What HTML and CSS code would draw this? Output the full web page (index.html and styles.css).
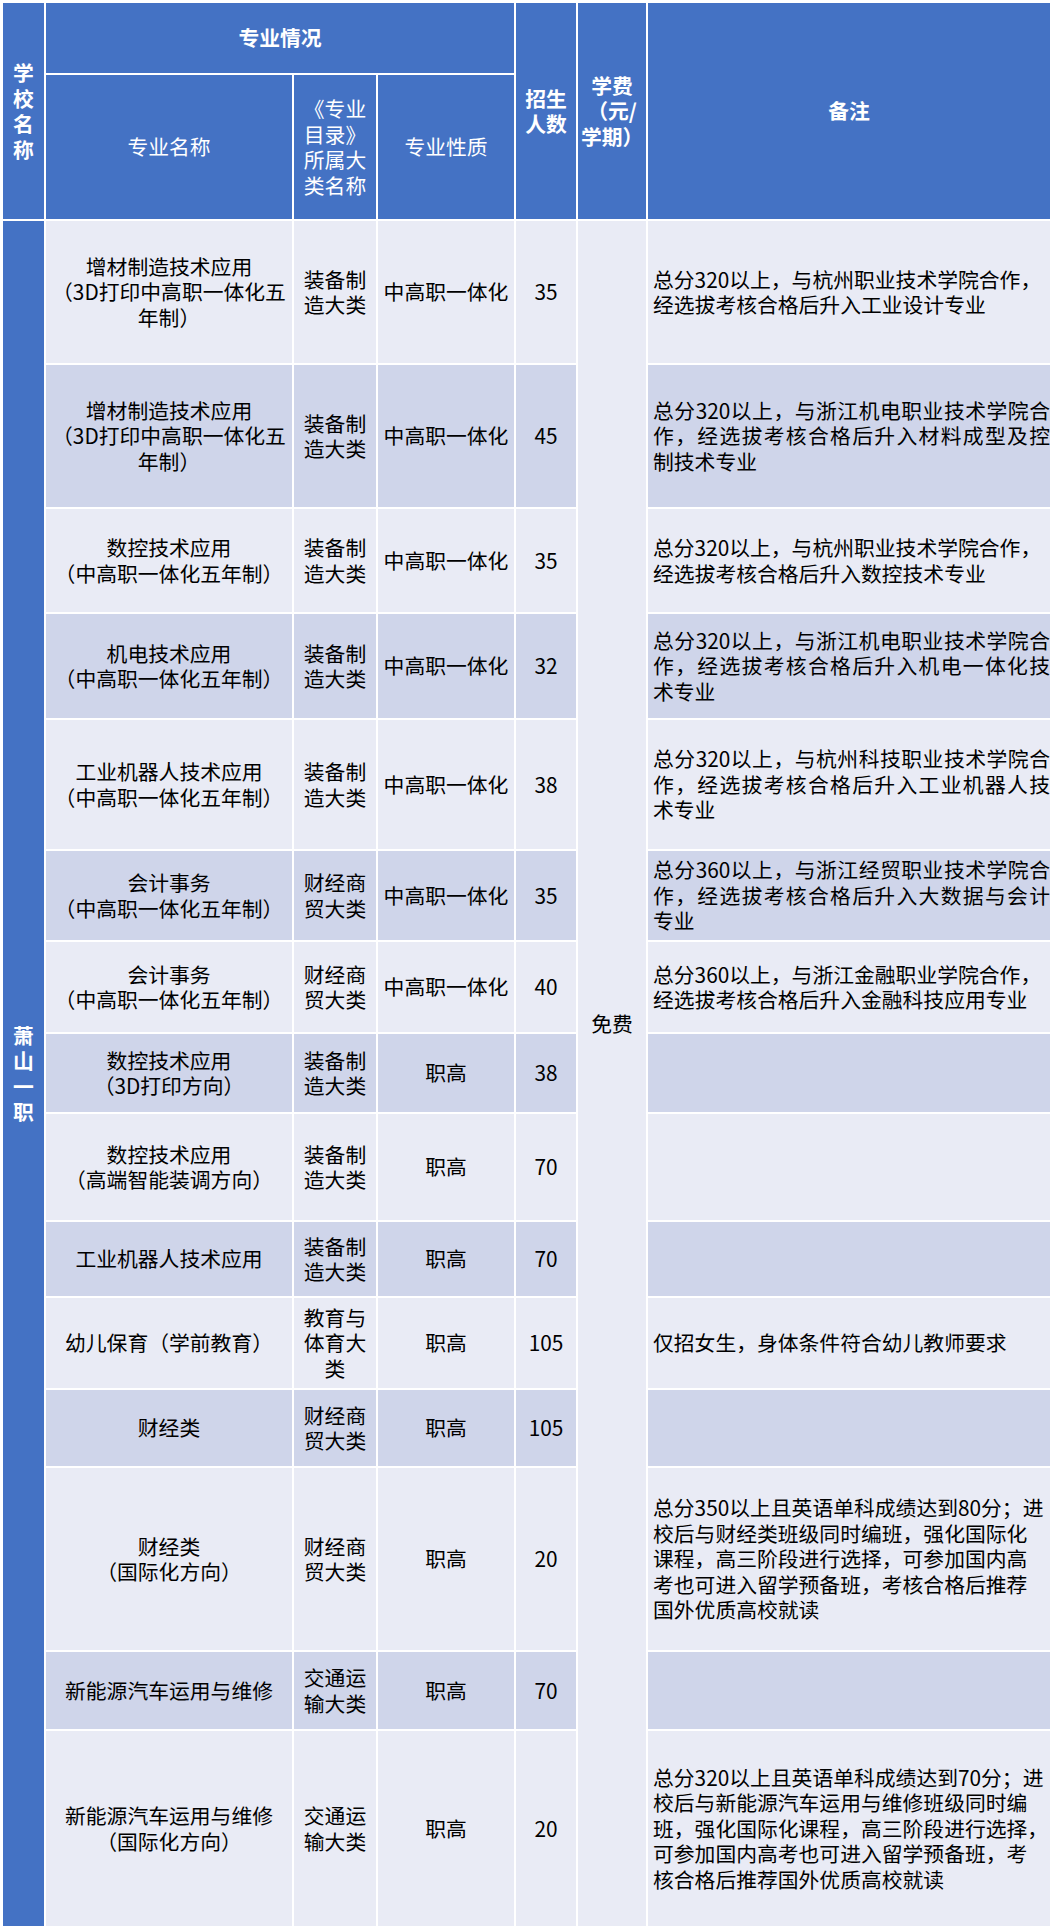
FILE: index.html
```html
<!DOCTYPE html>
<html lang="zh-CN">
<head>
<meta charset="utf-8">
<title>萧山一职 招生专业</title>
<link rel="stylesheet" href="styles.css">
</head>
<body>
<div class="sheet">
  <div class="cell h hb span2">学校名称</div>
  <div class="cell h hb span3c">专业情况</div>
  <div class="cell h hb span2">招生人数</div>
  <div class="cell h hb span2">学费（元/学期）</div>
  <div class="cell h hb span2">备注</div>
  <div class="cell h">专业名称</div>
  <div class="cell h">《专业目录》所属大类名称</div>
  <div class="cell h">专业性质</div>

  <!-- row 1 -->
  <div class="cell school">萧山一职</div>
  <div class="cell lt">增材制造技术应用<br>（3D打印中高职一体化五年制）</div>
  <div class="cell lt">装备制造大类</div>
  <div class="cell lt">中高职一体化</div>
  <div class="cell lt">35</div>
  <div class="cell fee">免费</div>
  <div class="cell lt remark"><div><span class="ln">总分320以上，与杭州职业技术学院合作，</span><span class="ln">经选拔考核合格后升入工业设计专业</span></div></div>

  <!-- row 2 -->
  <div class="cell dk">增材制造技术应用<br>（3D打印中高职一体化五年制）</div>
  <div class="cell dk">装备制造大类</div>
  <div class="cell dk">中高职一体化</div>
  <div class="cell dk">45</div>
  <div class="cell dk remark"><div><span class="ln j">总分320以上，与浙江机电职业技术学院合</span><span class="ln j">作，经选拔考核合格后升入材料成型及控</span><span class="ln">制技术专业</span></div></div>

  <!-- row 3 -->
  <div class="cell lt">数控技术应用<br>（中高职一体化五年制）</div>
  <div class="cell lt">装备制造大类</div>
  <div class="cell lt">中高职一体化</div>
  <div class="cell lt">35</div>
  <div class="cell lt remark"><div><span class="ln">总分320以上，与杭州职业技术学院合作，</span><span class="ln">经选拔考核合格后升入数控技术专业</span></div></div>

  <!-- row 4 -->
  <div class="cell dk">机电技术应用<br>（中高职一体化五年制）</div>
  <div class="cell dk">装备制造大类</div>
  <div class="cell dk">中高职一体化</div>
  <div class="cell dk">32</div>
  <div class="cell dk remark"><div><span class="ln j">总分320以上，与浙江机电职业技术学院合</span><span class="ln j">作，经选拔考核合格后升入机电一体化技</span><span class="ln">术专业</span></div></div>

  <!-- row 5 -->
  <div class="cell lt">工业机器人技术应用<br>（中高职一体化五年制）</div>
  <div class="cell lt">装备制造大类</div>
  <div class="cell lt">中高职一体化</div>
  <div class="cell lt">38</div>
  <div class="cell lt remark"><div><span class="ln j">总分320以上，与杭州科技职业技术学院合</span><span class="ln j">作，经选拔考核合格后升入工业机器人技</span><span class="ln">术专业</span></div></div>

  <!-- row 6 -->
  <div class="cell dk">会计事务<br>（中高职一体化五年制）</div>
  <div class="cell dk">财经商贸大类</div>
  <div class="cell dk">中高职一体化</div>
  <div class="cell dk">35</div>
  <div class="cell dk remark"><div><span class="ln j">总分360以上，与浙江经贸职业技术学院合</span><span class="ln j">作，经选拔考核合格后升入大数据与会计</span><span class="ln">专业</span></div></div>

  <!-- row 7 -->
  <div class="cell lt">会计事务<br>（中高职一体化五年制）</div>
  <div class="cell lt">财经商贸大类</div>
  <div class="cell lt">中高职一体化</div>
  <div class="cell lt">40</div>
  <div class="cell lt remark"><div><span class="ln">总分360以上，与浙江金融职业学院合作，</span><span class="ln">经选拔考核合格后升入金融科技应用专业</span></div></div>

  <!-- row 8 -->
  <div class="cell dk">数控技术应用<br>（3D打印方向）</div>
  <div class="cell dk">装备制造大类</div>
  <div class="cell dk">职高</div>
  <div class="cell dk">38</div>
  <div class="cell dk remark"></div>

  <!-- row 9 -->
  <div class="cell lt">数控技术应用<br>（高端智能装调方向）</div>
  <div class="cell lt">装备制造大类</div>
  <div class="cell lt">职高</div>
  <div class="cell lt">70</div>
  <div class="cell lt remark"></div>

  <!-- row 10 -->
  <div class="cell dk">工业机器人技术应用</div>
  <div class="cell dk">装备制造大类</div>
  <div class="cell dk">职高</div>
  <div class="cell dk">70</div>
  <div class="cell dk remark"></div>

  <!-- row 11 -->
  <div class="cell lt">幼儿保育（学前教育）</div>
  <div class="cell lt">教育与体育大类</div>
  <div class="cell lt">职高</div>
  <div class="cell lt">105</div>
  <div class="cell lt remark"><div><span class="ln">仅招女生，身体条件符合幼儿教师要求</span></div></div>

  <!-- row 12 -->
  <div class="cell dk">财经类</div>
  <div class="cell dk">财经商贸大类</div>
  <div class="cell dk">职高</div>
  <div class="cell dk">105</div>
  <div class="cell dk remark"></div>

  <!-- row 13 -->
  <div class="cell lt">财经类<br>（国际化方向）</div>
  <div class="cell lt">财经商贸大类</div>
  <div class="cell lt">职高</div>
  <div class="cell lt">20</div>
  <div class="cell lt remark"><div><span class="ln">总分350以上且英语单科成绩达到80分；进</span><span class="ln">校后与财经类班级同时编班，强化国际化</span><span class="ln">课程，高三阶段进行选择，可参加国内高</span><span class="ln">考也可进入留学预备班，考核合格后推荐</span><span class="ln">国外优质高校就读</span></div></div>

  <!-- row 14 -->
  <div class="cell dk">新能源汽车运用与维修</div>
  <div class="cell dk">交通运输大类</div>
  <div class="cell dk">职高</div>
  <div class="cell dk">70</div>
  <div class="cell dk remark"></div>

  <!-- row 15 -->
  <div class="cell lt">新能源汽车运用与维修<br>（国际化方向）</div>
  <div class="cell lt">交通运输大类</div>
  <div class="cell lt">职高</div>
  <div class="cell lt">20</div>
  <div class="cell lt remark"><div><span class="ln">总分320以上且英语单科成绩达到70分；进</span><span class="ln">校后与新能源汽车运用与维修班级同时编</span><span class="ln">班，强化国际化课程，高三阶段进行选择，</span><span class="ln">可参加国内高考也可进入留学预备班，考</span><span class="ln">核合格后推荐国外优质高校就读</span></div></div>
</div>
</body>
</html>
```

FILE: styles.css
```css
html, body {
  margin: 0;
  padding: 0;
  background: #ffffff;
}

body {
  font-family: "Noto Sans CJK SC", "Microsoft YaHei", sans-serif;
  color: #000000;
}

.sheet {
  display: grid;
  grid-template-columns: 41px 246px 82px 136px 60px 68px 402px;
  grid-template-rows:
    70px 144px
    142px 142px 103px 104px 129px 89px 90px 78px
    106px 74px 90px 76px 182px 77px 195px;
  gap: 2px;
  padding: 3px 0 0 3px;
  width: max-content;
}

.cell {
  display: grid;
  align-items: center;
  text-align: center;
  font-size: 20.8px;
  line-height: 25.5px;
  padding: 0 3px;
  overflow: hidden;
}

.h {
  background: #4472c4;
  color: #ffffff;
}

.hb {
  font-weight: 700;
}

.span2 {
  grid-row: span 2;
}

.span3c {
  grid-column: span 3;
}

.lt {
  background: #e9ebf5;
}

.dk {
  background: #cfd5ea;
}

.school {
  grid-row: span 15;
  background: #4472c4;
  color: #ffffff;
  font-weight: 700;
}

.fee {
  grid-row: span 15;
  background: #e9ebf5;
  padding-bottom: 100px;
}

.remark {
  text-align: left;
  padding: 0 0 0 5px;
}

.remark .ln {
  display: block;
  white-space: nowrap;
}

.remark .j {
  white-space: normal;
  text-align: justify;
  text-align-last: justify;
}
```
